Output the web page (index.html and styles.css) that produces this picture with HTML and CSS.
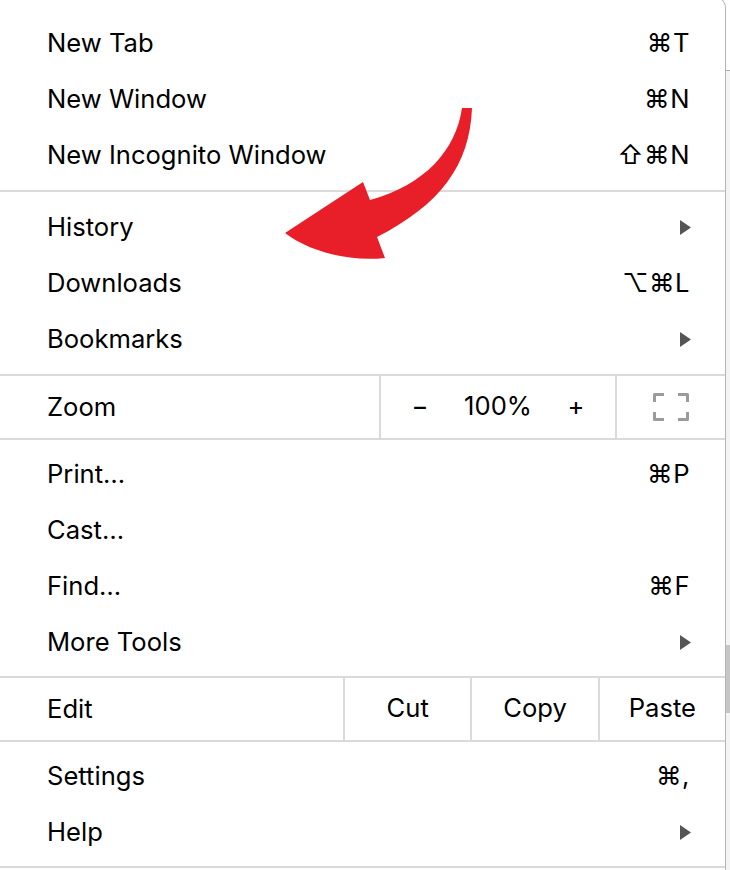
FILE: index.html
```html
<!DOCTYPE html>
<html>
<head>
<meta charset="utf-8">
<link rel="stylesheet" href="styles.css">
</head>
<body>
<div class="page">
  <div class="menu">
    <div class="group g-top">
      <div class="item"><span class="label">New Tab</span><span class="key">⌘T</span></div>
      <div class="item"><span class="label">New Window</span><span class="key">⌘N</span></div>
      <div class="item"><span class="label">New Incognito Window</span><span class="key">⇧⌘N</span></div>
    </div>
    <div class="sep"></div>
    <div class="group g-wide">
      <div class="item"><span class="label">History</span><svg class="sub" viewBox="0 0 11 15"><polygon points="0,0 11,7.5 0,15"/></svg></div>
      <div class="item"><span class="label">Downloads</span><span class="key">⌥⌘L</span></div>
      <div class="item"><span class="label">Bookmarks</span><svg class="sub" viewBox="0 0 11 15"><polygon points="0,0 11,7.5 0,15"/></svg></div>
    </div>
    <div class="sep"></div>
    <div class="split zoom">
      <div class="split-label zoom-label">Zoom</div>
      <div class="cell zoom-controls">
        <span class="zc">−</span>
        <span class="zc">100%</span>
        <span class="zc">+</span>
      </div>
      <div class="cell fullscreen">
        <svg class="fs" viewBox="0 0 36 28"><path d="M1.5 9V1.5H11M25 1.5H34.5V9M34.5 19V26.5H25M11 26.5H1.5V19"/></svg>
      </div>
    </div>
    <div class="sep"></div>
    <div class="group">
      <div class="item"><span class="label">Print…</span><span class="key">⌘P</span></div>
      <div class="item"><span class="label">Cast…</span></div>
      <div class="item"><span class="label">Find…</span><span class="key">⌘F</span></div>
      <div class="item"><span class="label">More Tools</span><svg class="sub" viewBox="0 0 11 15"><polygon points="0,0 11,7.5 0,15"/></svg></div>
    </div>
    <div class="sep"></div>
    <div class="split edit">
      <div class="split-label edit-label">Edit</div>
      <div class="cell btn">Cut</div>
      <div class="cell btn">Copy</div>
      <div class="cell btn">Paste</div>
    </div>
    <div class="sep"></div>
    <div class="group">
      <div class="item"><span class="label">Settings</span><span class="key">⌘,</span></div>
      <div class="item"><span class="label">Help</span><svg class="sub" viewBox="0 0 11 15"><polygon points="0,0 11,7.5 0,15"/></svg></div>
    </div>
    <div class="sep"></div>
  </div>
  <div class="strip"></div>
  <svg class="arrow" viewBox="0 0 730 870">
    <path d="M472 108C470 165 440 205 377 237L385 258C350 262 310 252 285 233L363 182L370 200C425 185 456 150 462 108Z"/>
  </svg>
</div>
</body>
</html>
```
FILE: styles.css
```css
html, body {
  margin: 0;
  padding: 0;
  background: #fff;
}
body {
  width: 730px;
  height: 870px;
  overflow: hidden;
  font-family: Inter, "Liberation Sans", "DejaVu Sans", sans-serif;
  font-size: 25.6px;
  color: #000;
}
.page {
  position: relative;
  display: flex;
  width: 730px;
  height: 870px;
}
.menu {
  width: 725px;
  margin-top: -4px;
  padding-top: 11px;
  border-top: 1px solid #c4c4c4;
  border-right: 1px solid #b4b4b4;
  border-top-right-radius: 12px;
  background: #fff;
  display: flex;
  flex-direction: column;
  flex: none;
}
.strip {
  flex: 1;
  background: linear-gradient(to bottom,
    #fff 0, #fff 70px, #a8a8a8 70px, #a8a8a8 71px, #f4f4f4 71px,
    #f4f4f4 645px, #c6c6c6 645px, #c6c6c6 713px, #f4f4f4 713px);
}
.group {
  display: flex;
  flex-direction: column;
  padding: 6px 0;
}
.g-top {
  padding: 7px 0;
}
.g-wide {
  padding: 7px 0;
}
.item {
  height: 56px;
  box-sizing: border-box;
  display: flex;
  align-items: center;
  justify-content: space-between;
  padding: 0 35px 1px 47px;
}
.key {
  font-family: Inter, "DejaVu Sans", sans-serif;
  letter-spacing: 0.5px;
}
.sub {
  width: 11px;
  height: 15px;
  margin-right: -1px;
  margin-top: 1px;
  fill: #555;
}
.sep {
  height: 2px;
  background: #dadada;
  flex: none;
}
.split {
  height: 62px;
  display: flex;
  align-items: stretch;
}
.split-label {
  display: flex;
  align-items: center;
  padding-left: 47px;
  padding-bottom: 1px;
  box-sizing: border-box;
}
.zoom-label {
  width: 379px;
}
.edit-label {
  width: 343px;
}
.cell {
  border-left: 2px solid #dadada;
  display: flex;
  align-items: center;
  justify-content: center;
}
.zoom-controls {
  width: 236px;
  display: grid;
  grid-template-columns: repeat(3, 78px);
  justify-content: center;
  align-items: center;
  padding-bottom: 3px;
  box-sizing: border-box;
}
.zc {
  text-align: center;
}
.fullscreen {
  flex: 1;
}
.fs {
  width: 36px;
  height: 28px;
  fill: none;
  stroke: #9b9b9b;
  stroke-width: 3;
  stroke-linejoin: round;
}
.btn {
  flex: 1;
  padding-bottom: 4px;
}
.arrow {
  position: absolute;
  left: 0;
  top: 0;
  width: 730px;
  height: 870px;
  pointer-events: none;
}
.arrow path {
  fill: #e81e28;
}
```
